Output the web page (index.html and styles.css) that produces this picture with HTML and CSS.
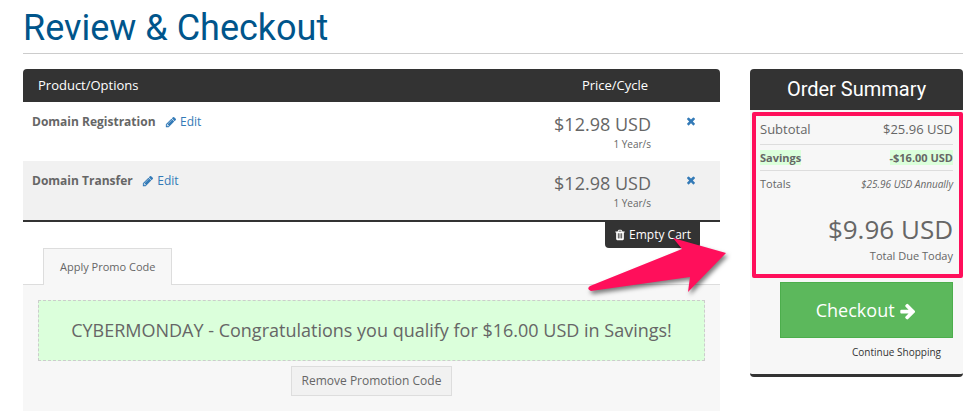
FILE: index.html
```html
<!DOCTYPE html>
<html lang="en">
<head>
    <meta charset="UTF-8">
    <meta name="viewport" content="width=device-width, initial-scale=1.0">
    <title>Review &amp; Checkout</title>
    <link rel="stylesheet" href="styles.css">
</head>
<body>
    <svg class="sprite" aria-hidden="true">
        <symbol id="icon-pencil" viewBox="0 0 1792 1792">
            <path d="M491 1536l91-91-235-235-91 91v107h128v128h107zm523-928q0-22-22-22-10 0-17 7l-542 542q-7 7-7 17 0 22 22 22 10 0 17-7l542-542q7-7 7-17zm-54-192l416 416-832 832h-416v-416zm683 96q0 53-37 90l-166 166-416-416 166-165q36-38 90-38 53 0 91 38l235 234q37 39 37 91z"/>
        </symbol>
        <symbol id="icon-times" viewBox="0 0 1792 1792">
            <path d="M1490 1322q0 40-28 68l-136 136q-28 28-68 28t-68-28l-294-294-294 294q-28 28-68 28t-68-28l-136-136q-28-28-28-68t28-68l294-294-294-294q-28-28-28-68t28-68l136-136q28-28 68-28t68 28l294 294 294-294q28-28 68-28t68 28l136 136q28 28 28 68t-28 68l-294 294 294 294q28 28 28 68z"/>
        </symbol>
        <symbol id="icon-trash" viewBox="0 0 1792 1792">
            <path d="M704 1376v-704q0-14-9-23t-23-9h-64q-14 0-23 9t-9 23v704q0 14 9 23t23 9h64q14 0 23-9t9-23zm256 0v-704q0-14-9-23t-23-9h-64q-14 0-23 9t-9 23v704q0 14 9 23t23 9h64q14 0 23-9t9-23zm256 0v-704q0-14-9-23t-23-9h-64q-14 0-23 9t-9 23v704q0 14 9 23t23 9h64q14 0 23-9t9-23zm-544-992h448l-48-117q-7-9-17-11h-317q-10 2-17 11zm928 32v64q0 14-9 23t-23 9h-96v948q0 83-47 143.500t-113 60.500h-832q-66 0-113-58.500t-47-141.500v-952h-96q-14 0-23-9t-9-23v-64q0-14 9-23t23-9h309l70-167q15-37 54-63t79-26h320q40 0 79 26t54 63l70 167h309q14 0 23 9t9 23z"/>
        </symbol>
        <symbol id="icon-arrow-right" viewBox="0 0 1792 1792">
            <path d="M1600 960q0 54-37 91l-651 651q-39 37-91 37-51 0-90-37l-75-75q-38-38-38-91t38-91l293-293h-704q-52 0-84.500-37.500t-32.500-90.500v-128q0-53 32.500-90.500t84.500-37.500h704l-293-294q-38-36-38-90t38-90l75-75q38-38 90-38 53 0 91 38l651 651q37 35 37 90z"/>
        </symbol>
    </svg>

    <div class="page">
        <h1>Review &amp; Checkout</h1>

        <div class="columns">
            <main class="cart">
                <table class="cart-items">
                    <thead>
                        <tr>
                            <th class="product">Product/Options</th>
                            <th class="price">Price/Cycle</th>
                            <th class="remove"></th>
                        </tr>
                    </thead>
                    <tbody>
                        <tr>
                            <td class="product">
                                <strong>Domain Registration</strong>
                                <a class="edit" href="#"><svg class="icon"><use href="#icon-pencil"/></svg> Edit</a>
                            </td>
                            <td class="price">$12.98 USD<span class="cycle">1 Year/s</span></td>
                            <td class="remove">
                                <button type="button" aria-label="Remove Domain Registration"><svg class="icon"><use href="#icon-times"/></svg></button>
                            </td>
                        </tr>
                        <tr>
                            <td class="product">
                                <strong>Domain Transfer</strong>
                                <a class="edit" href="#"><svg class="icon"><use href="#icon-pencil"/></svg> Edit</a>
                            </td>
                            <td class="price">$12.98 USD<span class="cycle">1 Year/s</span></td>
                            <td class="remove">
                                <button type="button" aria-label="Remove Domain Transfer"><svg class="icon"><use href="#icon-times"/></svg></button>
                            </td>
                        </tr>
                    </tbody>
                </table>

                <div class="empty-cart">
                    <button type="button"><svg class="icon"><use href="#icon-trash"/></svg> Empty Cart</button>
                </div>

                <div class="tabs">
                    <a class="tab" href="#promo">Apply Promo Code</a>
                </div>
                <div class="promo" id="promo">
                    <div class="promo-message">CYBERMONDAY - Congratulations you qualify for $16.00 USD in Savings!</div>
                    <button class="remove-promo" type="button">Remove Promotion Code</button>
                </div>
            </main>

            <aside class="summary">
                <h2>Order Summary</h2>
                <div class="totals">
                    <div class="line subtotal"><span>Subtotal</span><span>$25.96 USD</span></div>
                    <div class="line savings"><mark>Savings</mark><mark>-$16.00 USD</mark></div>
                    <div class="line recurring"><span>Totals</span><em>$25.96 USD Annually</em></div>
                    <div class="due">$9.96 USD<span>Total Due Today</span></div>
                    <svg class="pointer" viewBox="0 0 150 60" aria-hidden="true">
                        <path d="M14 44L106 7L97 -4L150 11L112 50L114 35L15 49Q10 47 14 44Z"/>
                    </svg>
                </div>
                <div class="actions">
                    <button class="checkout" type="button">Checkout <svg class="icon"><use href="#icon-arrow-right"/></svg></button>
                    <a class="continue" href="#">Continue Shopping</a>
                </div>
            </aside>
        </div>
    </div>
</body>
</html>
```
FILE: styles.css
```css
* {
    box-sizing: border-box;
}

body {
    margin: 0;
    background: #fff;
    color: #666;
    font-family: "Open Sans", sans-serif;
    font-size: 13px;
    line-height: 20px;
}

button {
    font: inherit;
    cursor: pointer;
}

a {
    color: #337ab7;
    text-decoration: none;
}

.sprite {
    display: none;
}

.icon {
    width: 12px;
    height: 12px;
    fill: currentColor;
    vertical-align: -2px;
}

.page {
    padding: 0 17px 9px 23px;
}

h1 {
    margin: 0 0 15px;
    padding: 6px 0 3px;
    border-bottom: 1px solid #ccc;
    color: #00558b;
    font-family: Roboto, sans-serif;
    font-size: 36px;
    font-weight: 400;
    line-height: 44px;
}

.columns {
    display: grid;
    grid-template-columns: minmax(0, 1fr) 213px;
    gap: 30px;
    align-items: start;
}

/* Cart table */
.cart-items {
    width: 100%;
    border-spacing: 0;
    border-bottom: 2px solid #333;
    table-layout: fixed;
}

.cart-items th {
    height: 33px;
    padding: 0 15px 2px;
    background: #333;
    color: #fff;
    font-weight: 400;
    text-align: left;
}

.cart-items th:first-child {
    border-top-left-radius: 4px;
}

.cart-items th:last-child {
    border-top-right-radius: 4px;
}

.cart-items th.price {
    width: 130px;
    padding: 0 0 2px;
    text-align: center;
}

.cart-items th.remove {
    width: 40px;
}

.cart-items td {
    height: 59px;
    padding: 9px;
    vertical-align: top;
}

.cart-items tbody tr:nth-child(even) {
    background: #f1f1f1;
}

.cart-items strong {
    margin-right: 6px;
    font-size: 12px;
}

.edit {
    font-size: 12px;
}

.cart-items td.price {
    padding: 10px 29px 0 0;
    font-size: 18px;
    line-height: 24px;
    text-align: right;
}

.cycle {
    display: block;
    font-size: 10px;
    line-height: 16px;
}

.cart-items td.remove {
    padding: 8px 0 0 5px;
}

.remove button {
    padding: 0;
    border: 0;
    background: none;
    color: #337ab7;
}

.empty-cart {
    padding-right: 20px;
    text-align: right;
}

.empty-cart button {
    height: 26px;
    padding: 0 9px;
    border: 0;
    border-radius: 0 0 4px 4px;
    background: #333;
    color: #fff;
    font-size: 12px;
    vertical-align: top;
}

/* Promo code */
.tabs {
    padding-left: 20px;
    display: flex;
    border-bottom: 1px solid #ddd;
}

.tab {
    margin-bottom: -1px;
    padding: 8px 16px;
    border: 1px solid #ddd;
    border-bottom: 0;
    background: #f7f7f7;
    color: #666;
    font-size: 11px;
}

.promo {
    padding: 15px;
    background: #f7f7f7;
    text-align: center;
}

.promo-message {
    margin-bottom: 5px;
    padding: 15px;
    border: 1px dashed #ccc;
    background: #dbffdb;
    font-size: 18px;
    line-height: 29px;
}

.remove-promo {
    height: 30px;
    padding: 0 10px;
    border: 1px solid #ddd;
    background: #f1f1f1;
    color: #666;
    font-size: 12px;
    vertical-align: top;
}

/* Order summary */
.summary {
    border-bottom: 3px solid #333;
    border-radius: 4px;
    background: #f7f7f7;
}

.summary h2 {
    margin: 0;
    border-radius: 4px 4px 0 0;
    background: #333;
    color: #fff;
    font-family: Roboto, sans-serif;
    font-size: 20px;
    font-weight: 400;
    line-height: 41px;
    text-align: center;
}

.totals {
    position: relative;
    margin: 2px 0 4px 2px;
    padding: 4px 6px 10px 4px;
    border: 4px solid #ff0f5b;
    border-radius: 2px;
}

.line {
    display: flex;
    justify-content: space-between;
    align-items: center;
    height: 26px;
    border-bottom: 1px solid #ddd;
    font-size: 11px;
}

.subtotal {
    align-items: flex-start;
    height: 25px;
    font-size: 13px;
    line-height: 18px;
}

.recurring {
    border-bottom: 0;
}

.recurring em {
    font-size: 10px;
}

.line mark {
    background: #dbffdb;
    color: #666;
    font-weight: 700;
    line-height: 15px;
}

.due {
    padding-top: 14px;
    font-size: 26px;
    line-height: 36px;
    text-align: right;
}

.due span {
    display: block;
    font-size: 11px;
    line-height: 17px;
}

/* Callout arrow, lies over the cart and points at the totals */
.pointer {
    position: absolute;
    top: 126px;
    right: 233px;
    width: 150px;
    height: 60px;
    overflow: visible;
    fill: #ff0f5b;
    filter: drop-shadow(2px 3px 2px rgba(0, 0, 0, 0.5));
}

.actions {
    padding: 0 10px 12px 30px;
    text-align: right;
}

.checkout {
    display: block;
    width: 100%;
    height: 56px;
    padding: 0;
    border: 1px solid #4cae4c;
    background: #5cb85c;
    color: #fff;
    font-size: 18px;
}

.checkout .icon {
    width: 18px;
    height: 18px;
    vertical-align: -3px;
}

.continue {
    display: block;
    padding: 4px 12px 0 0;
    color: #333;
    font-size: 10px;
}

@media (max-width: 760px) {
    .columns {
        grid-template-columns: minmax(0, 1fr);
    }

    .pointer {
        display: none;
    }
}
```
